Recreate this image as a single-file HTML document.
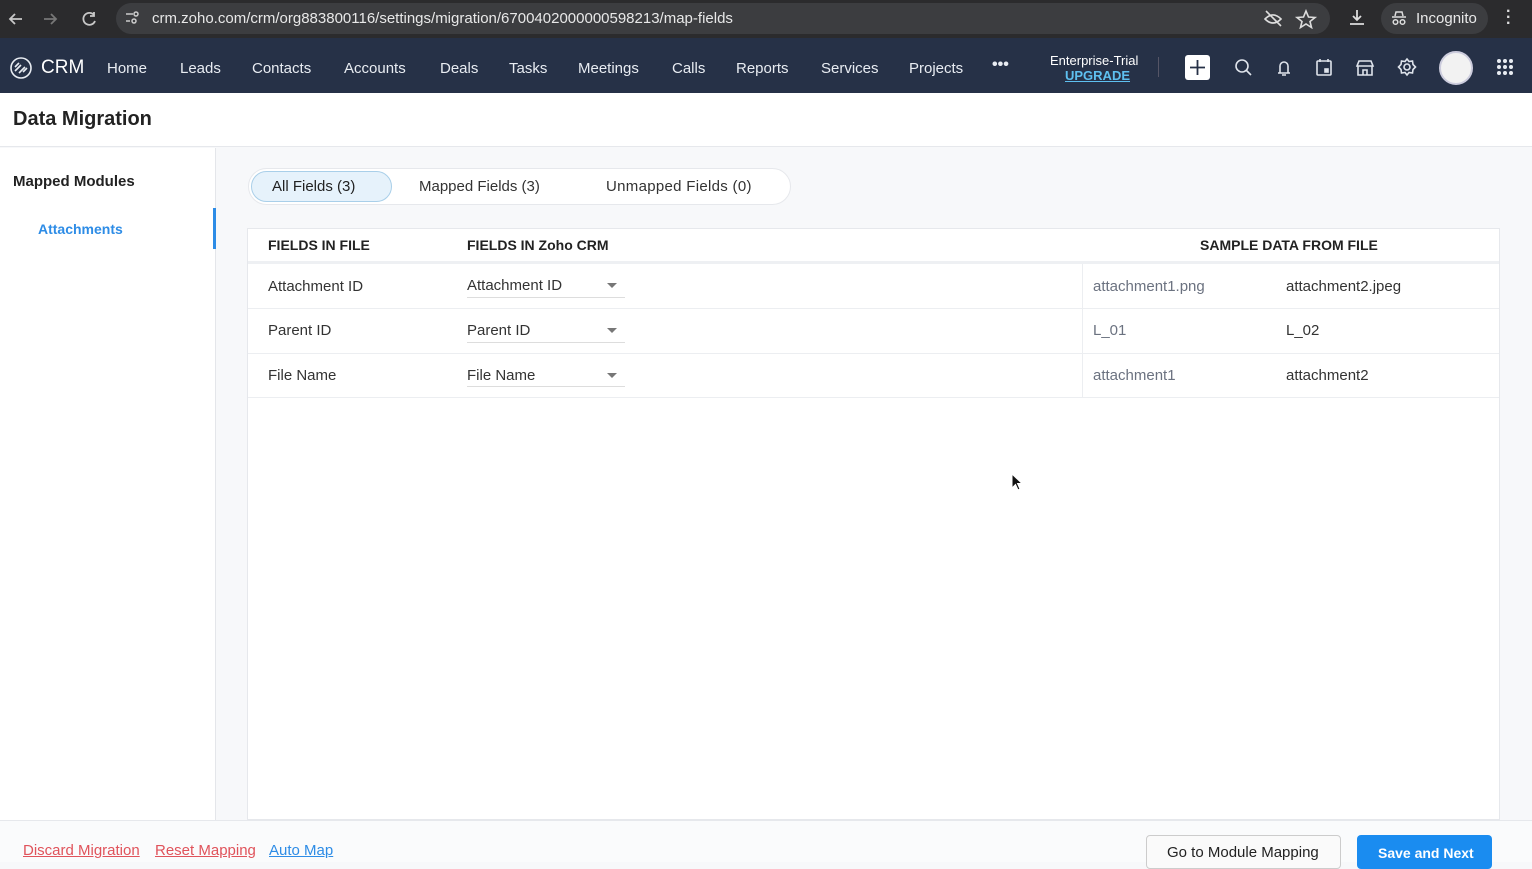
<!DOCTYPE html>
<html><head><meta charset="utf-8"><style>
*{box-sizing:border-box;margin:0;padding:0}
body{width:1532px;height:862px;overflow:hidden;font-family:"Liberation Sans",sans-serif;background:#f7f8fa;position:relative;color:#222}
.a{position:absolute;white-space:nowrap}
#chrome{left:0;top:0;width:1532px;height:38px;background:#2b2b2d}
#url{left:116px;top:3px;width:1214px;height:31px;border-radius:16px;background:#3c3d40}
#nav{left:0;top:38px;width:1532px;height:55px;background:#263147}
.nv{color:#e8ecf2;font-size:15px;top:60px}
.ic{stroke:#dfe4ec;fill:none;stroke-width:1.6}
</style></head><body>
<div class="a" id="chrome"></div>
<div class="a" id="url"></div>
<svg class="a" style="left:6px;top:9px" width="100" height="20"><g stroke="#c8c8c8" stroke-width="1.8" fill="none"><path d="M16 10H4M9 5L4 10L9 15"/><path d="M38 10H50M45 5L50 10L45 15" stroke="#777"/><path d="M88 6A6 6 0 1 0 89 12M88 3V7H84"/></g></svg>
<svg class="a" style="left:124px;top:10px" width="16" height="16"><g stroke="#ccc" stroke-width="1.5" fill="none"><path d="M2 4H9M2 11H6"/><circle cx="12" cy="4" r="2"/><circle cx="10" cy="11" r="2"/></g></svg>
<div class="a" style="left:152px;top:10px;color:#e8e8e8;font-size:15px">crm.zoho.com/crm/org883800116/settings/migration/6700402000000598213/map-fields</div>
<svg class="a" style="left:1264px;top:9px" width="60" height="20"><g stroke="#ddd" stroke-width="1.6" fill="none"><path d="M1 10Q9 2 17 10Q9 18 1 10Z"/><path d="M2 2L17 17"/><path d="M42 2L44.5 8L51 8.5L46 12.5L47.5 18.5L42 15L36.5 18.5L38 12.5L33 8.5L39.5 8Z"/></g></svg>
<svg class="a" style="left:1348px;top:8px" width="18" height="20"><g stroke="#ddd" stroke-width="1.8" fill="none"><path d="M9 2V12M5 8L9 12L13 8M2 16H16"/></g></svg>
<div class="a" style="left:1381px;top:3px;width:107px;height:31px;border-radius:16px;background:#3c3d40"></div>
<svg class="a" style="left:1391px;top:10px" width="16" height="16"><g stroke="#ddd" stroke-width="1.5" fill="none"><path d="M4 6L5 2H11L12 6M1 7H15"/><circle cx="4.5" cy="12" r="2.3"/><circle cx="11.5" cy="12" r="2.3"/></g></svg>
<div class="a" style="left:1416px;top:10px;color:#e8e8e8;font-size:15px">Incognito</div>
<div class="a" style="left:1506px;top:9px;color:#ddd;font-size:16px;line-height:6px;font-weight:bold">·<br>·<br>·</div>

<div class="a" id="nav"></div>
<svg class="a" style="left:9px;top:57px" width="26" height="22"><g stroke="#e8ecf2" stroke-width="1.6" fill="none"><circle cx="12" cy="11" r="10"/><path d="M6 14L12 8M10 16L16 10M14 15L18 11M6 10L10 6"/></g></svg>
<div class="a" style="left:41px;top:57px;color:#fff;font-size:19px">CRM</div>
<div class="a nv" style="left:107px">Home</div>
<div class="a nv" style="left:180px">Leads</div>
<div class="a nv" style="left:252px">Contacts</div>
<div class="a nv" style="left:344px">Accounts</div>
<div class="a nv" style="left:440px">Deals</div>
<div class="a nv" style="left:509px">Tasks</div>
<div class="a nv" style="left:578px">Meetings</div>
<div class="a nv" style="left:672px">Calls</div>
<div class="a nv" style="left:736px">Reports</div>
<div class="a nv" style="left:821px">Services</div>
<div class="a nv" style="left:909px">Projects</div>
<div class="a nv" style="left:992px;top:56px;font-weight:bold;font-size:16px">•••</div>
<div class="a" style="left:1050px;top:53px;color:#fff;font-size:13px">Enterprise-Trial</div>
<div class="a" style="left:1065px;top:68px;color:#5ec0f0;font-size:13px;font-weight:bold;text-decoration:underline">UPGRADE</div>
<div class="a" style="left:1158px;top:57px;width:1px;height:20px;background:#556"></div>
<div class="a" style="left:1185px;top:55px;width:25px;height:25px;background:#fff;border-radius:3px"></div>
<svg class="a" style="left:1185px;top:55px" width="25" height="25"><path d="M12.5 5V20M5 12.5H20" stroke="#263147" stroke-width="1.8"/></svg>
<svg class="a" style="left:1233px;top:57px" width="200" height="22"><g class="ic"><circle cx="9" cy="9" r="6"/><path d="M13.5 13.5L18 18"/><path d="M45 16H57M47 16V9A4 4 0 0 1 55 9V16M49 18H53"/><rect x="84" y="4" width="14" height="14" rx="1"/><path d="M87 2V5M95 2V5"/><rect x="92" y="12" width="3" height="3" fill="#dfe4ec"/><path d="M126 4H138L140 9H124ZM125 9V18H139V9M130 18V13H134V18"/><circle cx="174" cy="10" r="3"/><path d="M174 2L176 4.5L179.5 4L180 7.5L182.5 10L180 12.5L179.5 16L176 15.5L174 18L172 15.5L168.5 16L168 12.5L165.5 10L168 7.5L168.5 4L172 4.5Z"/></g></svg>
<div class="a" style="left:1439px;top:51px;width:34px;height:34px;border-radius:50%;background:#f2f2f2;border:2px solid #ccd"></div>
<svg class="a" style="left:1496px;top:58px" width="18" height="18"><g fill="#e8ecf2"><circle cx="3" cy="3" r="2"/><circle cx="9" cy="3" r="2"/><circle cx="15" cy="3" r="2"/><circle cx="3" cy="9" r="2"/><circle cx="9" cy="9" r="2"/><circle cx="15" cy="9" r="2"/><circle cx="3" cy="15" r="2"/><circle cx="9" cy="15" r="2"/><circle cx="15" cy="15" r="2"/></g></svg>

<div class="a" style="left:0;top:93px;width:1532px;height:54px;background:#fff;border-bottom:1px solid #e6e8ec"></div>
<div class="a" style="left:13px;top:108px;font-size:20px;font-weight:bold;color:#222">Data Migration</div>
<div class="a" style="left:0;top:148px;width:216px;height:672px;background:#fff;border-right:1px solid #e4e6ea"></div>
<div class="a" style="left:13px;top:173px;font-size:15px;font-weight:bold;color:#222">Mapped Modules</div>
<div class="a" style="left:0;top:208px;width:216px;height:41px;background:#fff;border-right:3px solid #2d8ce6"></div>
<div class="a" style="left:38px;top:221px;font-size:14px;font-weight:bold;color:#2d8ce6">Attachments</div>

<div class="a" style="left:248px;top:168px;width:543px;height:37px;border-radius:19px;background:#fff;border:1px solid #e6e8ec"></div>
<div class="a" style="left:251px;top:171px;width:141px;height:31px;border-radius:16px;background:#e6f2fb;border:1px solid #a9cfe9"></div>
<div class="a" style="left:272px;top:178px;font-size:15px">All Fields (3)</div>
<div class="a" style="left:419px;top:178px;font-size:15px;color:#333">Mapped Fields (3)</div>
<div class="a" style="left:606px;top:178px;font-size:15px;color:#333;letter-spacing:0.3px">Unmapped Fields (0)</div>

<div class="a" style="left:247px;top:228px;width:1253px;height:592px;background:#fff;border:1px solid #e6e8ec"></div>
<div class="a" style="left:248px;top:261px;width:1251px;height:3px;background:#eef0f3"></div>
<div class="a" style="left:268px;top:237px;font-size:14px;font-weight:bold;color:#222">FIELDS IN FILE</div>
<div class="a" style="left:467px;top:237px;font-size:14px;font-weight:bold;color:#222">FIELDS IN Zoho CRM</div>
<div class="a" style="left:1200px;top:237px;font-size:14px;font-weight:bold;color:#222">SAMPLE DATA FROM FILE</div>
<div class="a" style="left:1082px;top:264px;width:1px;height:134px;background:#eceef1"></div>
<div class="a" style="left:248px;top:308px;width:1251px;height:1px;background:#eceef1"></div>
<div class="a" style="left:248px;top:353px;width:1251px;height:1px;background:#eceef1"></div>
<div class="a" style="left:248px;top:397px;width:1251px;height:1px;background:#eceef1"></div>

<div class="a" style="left:268px;top:278px;font-size:15px;color:#333">Attachment ID</div>
<div class="a" style="left:467px;top:277px;font-size:15px;color:#333">Attachment ID</div>
<div class="a" style="left:467px;top:297px;width:158px;height:1px;background:#ddd"></div>
<div class="a" style="left:268px;top:322px;font-size:15px;color:#333">Parent ID</div>
<div class="a" style="left:467px;top:322px;font-size:15px;color:#333">Parent ID</div>
<div class="a" style="left:467px;top:342px;width:158px;height:1px;background:#ddd"></div>
<div class="a" style="left:268px;top:367px;font-size:15px;color:#333">File Name</div>
<div class="a" style="left:467px;top:367px;font-size:15px;color:#333">File Name</div>
<div class="a" style="left:467px;top:386px;width:158px;height:1px;background:#ddd"></div>
<svg class="a" style="left:606px;top:283px" width="12" height="100"><g fill="#777"><path d="M1 0H11L6 5Z"/><path d="M1 45H11L6 50Z"/><path d="M1 90H11L6 95Z"/></g></svg>

<div class="a" style="left:1093px;top:278px;font-size:15px;color:#6b7280">attachment1.png</div>
<div class="a" style="left:1286px;top:278px;font-size:15px;color:#333">attachment2.jpeg</div>
<div class="a" style="left:1093px;top:322px;font-size:15px;color:#6b7280">L_01</div>
<div class="a" style="left:1286px;top:322px;font-size:15px;color:#333">L_02</div>
<div class="a" style="left:1093px;top:367px;font-size:15px;color:#6b7280">attachment1</div>
<div class="a" style="left:1286px;top:367px;font-size:15px;color:#333">attachment2</div>

<svg class="a" style="left:1011px;top:473px" width="12" height="18"><path d="M1 1V15L4.5 11.5L7 17L9 16L6.5 10.5H11Z" fill="#111" stroke="#fff" stroke-width="1"/></svg>

<div class="a" style="left:0;top:820px;width:1532px;height:42px;background:#fafbfc;border-top:1px solid #e6e8ec"></div>
<div class="a" style="left:23px;top:842px;font-size:15px;color:#e0535b;text-decoration:underline">Discard Migration</div>
<div class="a" style="left:155px;top:842px;font-size:15px;color:#e0535b;text-decoration:underline">Reset Mapping</div>
<div class="a" style="left:269px;top:842px;font-size:15px;color:#2d8ce6;text-decoration:underline">Auto Map</div>
<div class="a" style="left:1146px;top:835px;width:195px;height:34px;border:1px solid #ccc;border-radius:4px;background:#fafafa"></div>
<div class="a" style="left:1167px;top:844px;font-size:15px;color:#222">Go to Module Mapping</div>
<div class="a" style="left:1357px;top:835px;width:135px;height:34px;border-radius:4px;background:#1a8cf0"></div>
<div class="a" style="left:1378px;top:845px;font-size:14px;color:#fff;font-weight:bold">Save and Next</div>
</body></html>
